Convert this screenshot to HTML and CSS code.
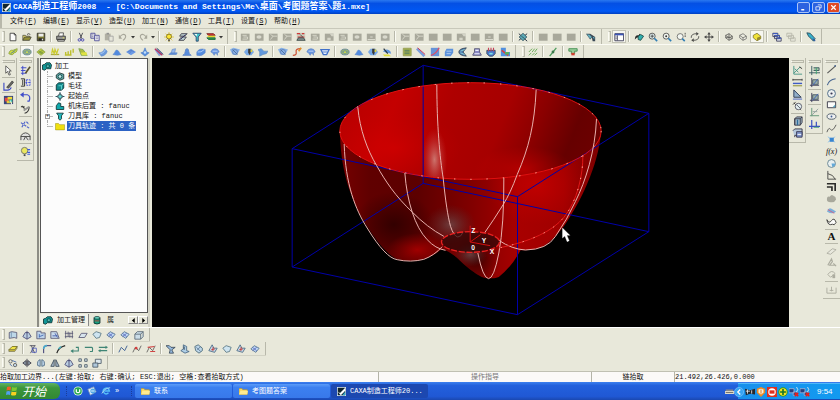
FILE: index.html
```html
<!DOCTYPE html>
<html lang="zh-CN">
<head>
<meta charset="utf-8">
<title>CAXA制造工程师2008</title>
<link rel="stylesheet" href="styles.css">
</head>
<body>
<svg class="defs" aria-hidden="true">
  <symbol id="new" viewBox="0 0 12 12"><path d="M2.500 1.500h5l2 2v7h-7z" fill="#fff" stroke="#222"/><path d="M7.500 1.500v2h2" fill="none" stroke="#222"/></symbol>
  <symbol id="open" viewBox="0 0 12 12"><path d="M1 10V4h3l1 1h4v2" fill="#e8d860" stroke="#443"/><path d="M1 10l2-4h8l-2 4z" fill="#8a8420" stroke="#332"/><path d="M6 3q2-2 4 0" fill="none" stroke="#222"/></symbol>
  <symbol id="save" viewBox="0 0 12 12"><path d="M1.500 1.500h9v9h-9z" fill="#6d6a1a" stroke="#111"/><path d="M3 2h6v3.500H3z" fill="#eee"/><path d="M3 7.500h6v3H3z" fill="#111"/><path d="M7 8h1.500v2H7z" fill="#ddd"/></symbol>
  <symbol id="print" viewBox="0 0 12 12"><path d="M3 5l1-4h5L8.500 5" fill="#fff" stroke="#333"/><path d="M.8 5h10.400v4H.8z" fill="#888" stroke="#222"/><path d="M2 9h8v2H2z" fill="#ccc" stroke="#222"/><path d="M8 7h2" stroke="#ee4"/></symbol>
  <symbol id="cut" viewBox="0 0 12 12"><path d="M4 1l3 7M8 1L5 8" stroke="#223" fill="none"/><circle cx="4" cy="9.500" r="1.500" fill="none" stroke="#22a"/><circle cx="8" cy="9.500" r="1.500" fill="none" stroke="#22a"/></symbol>
  <symbol id="copy" viewBox="0 0 12 12"><path d="M1 1.500h5v6H1z" fill="#dde" stroke="#338"/><path d="M5.500 4h5.500v6.500H5.500z" fill="#eef" stroke="#338"/><path d="M2 3.500h2M2 5.500h2M6.800 6h3M6.800 8h3" stroke="#557" stroke-width=".7"/></symbol>
  <symbol id="paste" viewBox="0 0 12 12"><path d="M1 2h7v8H1z" fill="#aaa99c"/><path d="M3 1h3v2H3z" fill="#888"/><path d="M6 5h5v6H6z" fill="#e5e5da" stroke="#999"/></symbol>
  <symbol id="undo" viewBox="0 0 12 12"><path d="M2 6q4-5 7-2 1 3-3 6" fill="none" stroke="#a09f92" stroke-width="1.300"/><path d="M1 3v5h4z" fill="#a09f92"/></symbol>
  <symbol id="redo" viewBox="0 0 12 12"><path d="M10 6q-4-5-7-2-1 3 3 6" fill="none" stroke="#a09f92" stroke-width="1.300"/><path d="M11 3v5H7z" fill="#a09f92"/></symbol>
  <symbol id="bulb" viewBox="0 0 12 12"><path d="M6 0v12M0 6h12M2 2l8 8M10 2l-8 8" stroke="#d8b800" stroke-width=".8"/><circle cx="6" cy="5.500" r="3" fill="#ffe620" stroke="#665500"/><path d="M5 9h2v2H5z" fill="#333"/></symbol>
  <symbol id="layers" viewBox="0 0 12 12"><path d="M4 2h7L8 5H2zM4 6h6L7 10H1z" fill="#b8ccd0" stroke="#223"/><path d="M9 3L3 9" stroke="#115"/></symbol>
  <symbol id="funnel" viewBox="0 0 12 12"><path d="M1 1.500h10L7.500 6v5H5V6z" fill="#28c0c8" stroke="#125"/><path d="M3 2.500h3L5.500 5z" fill="#fff"/></symbol>
  <symbol id="stack" viewBox="0 0 12 12"><path d="M1 2h8l2 2H3z" fill="#e02020" stroke="#600"/><path d="M1 4.500l2 2h8v-2H3z" fill="#e8d818"/><path d="M1 7l2 2h8V7H3z" fill="#129040" stroke="#052"/></symbol>
  <symbol id="gp" viewBox="0 0 12 12"><path d="M1 2h10.500v8.500H1z" fill="#a0a093"/></symbol>
  <symbol id="ga" viewBox="0 0 12 12"><path d="M1 2h10.500v8.500H1z" fill="#a0a093"/><path d="M3 4h5M3 8.500h6V6H4" fill="none" stroke="#dcdccf"/></symbol>
  <symbol id="gb" viewBox="0 0 12 12"><path d="M1 2h10.500v8.500H1z" fill="#a0a093"/><ellipse cx="6" cy="6" rx="3" ry="2" fill="#d8d8cc"/></symbol>
  <symbol id="gc" viewBox="0 0 12 12"><path d="M1 2h10.500v8.500H1z" fill="#a0a093"/><path d="M3 9l3-4h5M6 5L3 3" fill="none" stroke="#dcdccf"/></symbol>
  <symbol id="gd" viewBox="0 0 12 12"><path d="M1 2h10.500v8.500H1z" fill="#a0a093"/><path d="M2 9h9M5 6h3" stroke="#e4e4d8"/></symbol>
  <symbol id="ge" viewBox="0 0 12 12"><path d="M1 2h10.500v8.500H1z" fill="#a0a093"/><path d="M7 2h5v3H9zM4 10V7h4v3" fill="#d2d2c5"/></symbol>
  <symbol id="mach" viewBox="0 0 12 12"><path d="M1 1h10v9H1z" fill="#c9cdbb"/><path d="M1 2h4M7 2h3M2 6h8" stroke="#c22" stroke-width="1.500"/><path d="M1 10l2-3h6l2 3zM5 3l3 3" fill="#788" stroke="#233"/></symbol>
  <symbol id="wand" viewBox="0 0 12 12"><path d="M1 2l10 9M1 10l10-8" stroke="#123" stroke-width="1.200"/><path d="M6 1.500L10.500 6 6 10.500 1.500 6z" fill="#4aa4b4" stroke="#134"/><path d="M4 5l4 3" stroke="#134"/></symbol>
  <symbol id="bino" viewBox="0 0 12 12"><path d="M0 2h5l6 4v5H8L7 7 5 9z" fill="#234" /><path d="M1 3h3l3 3-2 2zM8 6h2v3" fill="#55a8bb"/></symbol>
  <symbol id="win" viewBox="0 0 12 12"><path d="M1 2h10.500v8.500H1z" fill="#fff" stroke="#113"/><path d="M1 2h10.500v2H1z" fill="#2440b0"/><path d="M4 4v6M2 6h1M2 8h1" stroke="#113"/></symbol>
  <symbol id="cubes" viewBox="0 0 12 12"><path d="M1 9q0-6 5-5V2l4 3-4 3V6Q3 6 1 9z" fill="#111"/><path d="M5 5l3-2 3.500 2-3.500 5-3-1z" fill="#18a8a8" stroke="#033"/></symbol>
  <symbol id="zin" viewBox="0 0 12 12"><circle cx="5" cy="5" r="3.600" fill="#ddeef2" stroke="#333"/><path d="M3 5h4M5 3v4" stroke="#222"/><path d="M7.500 7.500l3.500 3.500" stroke="#1870b0" stroke-width="2"/></symbol>
  <symbol id="zdot" viewBox="0 0 12 12"><circle cx="5" cy="5" r="3.600" fill="#f4f8f4" stroke="#333"/><circle cx="5" cy="5" r="1.200" fill="#222"/><path d="M7.500 7.500l3.500 3.500" stroke="#1870b0" stroke-width="2"/></symbol>
  <symbol id="zsel" viewBox="0 0 12 12"><circle cx="5" cy="5.500" r="3.600" fill="#f4f8f4" stroke="#555"/><path d="M7.500 8l3 3" stroke="#1870b0" stroke-width="2"/><path d="M11 1v6" stroke="#222" stroke-dasharray="2 1"/></symbol>
  <symbol id="rot" viewBox="0 0 12 12"><path d="M1.500 7Q1 2 8 2M10.500 5Q11 10 4 10" fill="none" stroke="#333"/><path d="M7.500 0l3 2-3 2.500zM4.500 7.500l-3 2.500 3 2z" fill="#333"/></symbol>
  <symbol id="pan" viewBox="0 0 12 12"><path d="M6 2v8M2 6h8" stroke="#333" stroke-width="1.200"/><path d="M6 0l2 3H4zM6 12l2-3H4zM0 6l3-2v4zM12 6L9 4v4z" fill="#333"/></symbol>
  <symbol id="wire" viewBox="0 0 12 12"><path d="M2 4l4-2 4 3v3l-4 2-4-3z M2 4l4 3 4-2M6 7v3M6 2v4L2 7M6 6l4 2" fill="#ddddd0" stroke="#333" stroke-width=".8"/></symbol>
  <symbol id="hide" viewBox="0 0 12 12"><path d="M2 4l4-2 4 3v3l-4 2-4-3z M2 4l4 3 4-2M6 7v3" fill="#eeeee4" stroke="#444" stroke-width=".8"/></symbol>
  <symbol id="solid" viewBox="0 0 12 12"><path d="M1.500 4L6 1.500 10.500 5v3L6 10.500 1.500 7z" fill="#f0e020" stroke="#554a00" stroke-width=".8"/><path d="M6 7l4.500-2v3L6 10.500z" fill="#8a7d10"/></symbol>
  <symbol id="casc" viewBox="0 0 12 12"><path d="M1 1.500h6v4H1zM3 4h6v4H3zM5.500 7H11v4H5.500z" fill="#dde4f4" stroke="#224"/><path d="M1 1.800h6M3 4.300h6M5.500 7.300H11" stroke="#2848b8" stroke-width="1.300"/></symbol>
  <symbol id="cascg" viewBox="0 0 12 12"><path d="M1 1.500h6v4H1zM3 4h6v4H3zM5.500 7H11v4H5.500z" fill="#e8e8dc" stroke="#b0b0a2"/></symbol>
  <symbol id="pen" viewBox="0 0 12 12"><path d="M1 1l4 .5L11 8l-2 3-6-6z" fill="#20a8c8" stroke="#134"/><path d="M8 8l3 3" stroke="#1848a0" stroke-width="1.500"/></symbol>
  <symbol id="y1" viewBox="0 0 12 12"><path d="M1 8q1-5 5-4l5-2q0 5-4 5-1 4-6 1z" fill="#d4dc28" stroke="#7a9828"/><path d="M3 8l6-4" stroke="#2868a0"/></symbol>
  <symbol id="y2" viewBox="0 0 12 12"><ellipse cx="6" cy="6" rx="5" ry="3.500" fill="#8aa868" stroke="#547898"/><path d="M3 6l3-1.500L9 6 6 8z" fill="#d8e030" stroke="#589"/></symbol>
  <symbol id="y3" viewBox="0 0 12 12"><path d="M1 6l5-4 5 4-5 4z" fill="#c0cc28" stroke="#88a03c"/><path d="M3 7l5-3M5 8.500l4-3M3 5l5 3" stroke="#487830" stroke-width=".8"/></symbol>
  <symbol id="y4" viewBox="0 0 12 12"><path d="M1 9h10" stroke="#a5a52c" stroke-width="1.500"/><path d="M2 8l1-5 2 5 1-5 2 5 2-6" fill="none" stroke="#c8c818" stroke-width="1.500"/></symbol>
  <symbol id="y5" viewBox="0 0 12 12"><path d="M2 9V6M5 9V5M8 9V4M11 7V2M1 9.500h8" stroke="#b8ba18" stroke-width="1.700"/></symbol>
  <symbol id="y6" viewBox="0 0 12 12"><path d="M1 2l5 1 5 7H4z" fill="#a8b82c" stroke="#68983c"/><path d="M3 7l7-1 1 4H5z" fill="#dfe22c"/></symbol>
  <symbol id="b1" viewBox="0 0 12 12"><path d="M1 7q5 0 7-5l3 3q-1 5-7 6z" fill="#5a90dc" stroke="#4c7cc8" stroke-width=".7"/><path d="M3 8q4 0 6-5" fill="none" stroke="#a8ccff"/></symbol>
  <symbol id="b2" viewBox="0 0 12 12"><path d="M1 9q2-1 3-4t4 0q1 3 3 4-4 2-10 0z" fill="#3d7ee0" stroke="#4c7cc8" stroke-width=".7"/></symbol>
  <symbol id="b3" viewBox="0 0 12 12"><path d="M0 6l6-4 6 4-6 4z" fill="#5a90e8"/><path d="M2 6l4-2 4 2M4 8l3-4" stroke="#3d68c0" fill="none" stroke-width=".8"/></symbol>
  <symbol id="b4" viewBox="0 0 12 12"><path d="M1 7l3-1 2-5 2 5 3 1-5 4z" fill="#4080dd" stroke="#4070c0" stroke-width=".7"/><circle cx="6" cy="6.500" r="1.500" fill="#bcdcff"/></symbol>
  <symbol id="b5" viewBox="0 0 12 12"><path d="M1 4l4-2 6 6-5 3z" fill="#789bd8"/><path d="M1 2l9 8" stroke="#b01850" stroke-width="1.700"/><path d="M3 1l8 8" stroke="#234"/></symbol>
  <symbol id="b6" viewBox="0 0 12 12"><path d="M1 9h9l1-2H3z" fill="#4c85dd" stroke="#4070c0" stroke-width=".7"/><path d="M4 7l1-4 4-1-1 5z" fill="#8fb5f0" stroke="#4070c0" stroke-width=".7"/></symbol>
  <symbol id="b7" viewBox="0 0 12 12"><path d="M1 10q3-2 3-5t2-3 2 3 3 5z" fill="#4580dd" stroke="#4674c4"/></symbol>
  <symbol id="b8" viewBox="0 0 12 12"><path d="M1 6q3-5 10-3v4q-4 5-10 3z" fill="#4080e0" stroke="#4674c4" stroke-width=".7"/><path d="M2 6q4 1 8-3" fill="none" stroke="#b5d4ff"/></symbol>
  <symbol id="b9" viewBox="0 0 12 12"><path d="M1 6q1-4 5-4t5 4l-2 1v3L7 7 5 10 3 7z" fill="#5288e0" stroke="#4674c4" stroke-width=".7"/><path d="M3 5h6" stroke="#cce0ff"/></symbol>
  <symbol id="c1" viewBox="0 0 12 12"><path d="M0 3l4-2 8 2-4 7-5-1z" fill="#78a8e8"/><circle cx="6" cy="6" r="3" fill="none" stroke="#4a70b0"/><path d="M3 3l6 6" stroke="#358"/></symbol>
  <symbol id="c2" viewBox="0 0 12 12"><path d="M0 6l3-4h6l3 4-3 4H3z" fill="#68a0e8"/><path d="M5 2h3v5l-1 3-2-3z" fill="#222"/><path d="M8 3h2v3H8z" fill="#e4d020"/></symbol>
  <symbol id="c3" viewBox="0 0 12 12"><path d="M0 3l4-1 3 3h5l-2 3-4 1-4 2V6z" fill="#4f8edf" stroke="#4a78b0" stroke-width=".7"/></symbol>
  <symbol id="c4" viewBox="0 0 12 12"><path d="M1 10q5 0 4-4t5-4" fill="none" stroke="#c84020" stroke-width="1.500"/><path d="M8 5l3-4" stroke="#e08010" stroke-width="2"/></symbol>
  <symbol id="c5" viewBox="0 0 12 12"><path d="M1 3h10L8 9H4z" fill="#e6efff" stroke="#2860c8" stroke-width="1.500"/><path d="M3 6h6" stroke="#2860c8"/></symbol>
  <symbol id="c6" viewBox="0 0 12 12"><path d="M1 5q5-4 9 0l1 3-4-1H5z" fill="#4a88e0"/><path d="M1 9h7l3 2H3z" fill="#e0dd20"/><path d="M2 2l5 6" stroke="#123" stroke-width="1.500"/></symbol>
  <symbol id="d1" viewBox="0 0 12 12"><path d="M1.500 1.500h9.500v9H1.500z" fill="#9aa838" stroke="#8a9440"/><path d="M3 4h6M3 6h6M3 8h6" stroke="#3a6a58"/></symbol>
  <symbol id="d2" viewBox="0 0 12 12"><path d="M1 2l9 9" stroke="#6c94dc" stroke-width="3"/><path d="M2 1l9 8" stroke="#cc2048" stroke-width="1.200"/></symbol>
  <symbol id="d3" viewBox="0 0 12 12"><path d="M1 1h10v10H1z" fill="#5588d8"/><path d="M1 10Q7 9 11 1" stroke="#d83858" fill="none" stroke-width="1.500"/></symbol>
  <symbol id="d4" viewBox="0 0 12 12"><path d="M3 2h8v5l-3 4H1V6z" fill="#4886dd"/><path d="M3 5h6M3 8h5" stroke="#bcd5f8"/></symbol>
  <symbol id="d5" viewBox="0 0 12 12"><path d="M10 1Q1 2 1 6t9 5L6 6z" fill="#3569a8" stroke="#234"/><path d="M3 5l5-2M3 7l5 2" stroke="#8fe0e0"/></symbol>
  <symbol id="d6" viewBox="0 0 12 12"><path d="M3 2h6v4l2 3v1H1V9l2-3z" fill="#7c7cc0" stroke="#446"/><path d="M4 4h4M3 8h6" stroke="#eef0ff" stroke-width="1.300"/></symbol>
  <symbol id="d7" viewBox="0 0 12 12"><path d="M1 4h10v4l-3 3H4L1 8z" fill="#3568c8" stroke="#234"/><path d="M3 1v4M6 1v4M9 1v4" stroke="#c02848" stroke-width="1.300"/><path d="M4 8h4" stroke="#70e0e8" stroke-width="2"/></symbol>
  <symbol id="d8" viewBox="0 0 12 12"><path d="M1 1h6v5h5v5H1z" fill="#3c84e0"/><path d="M2 4l8 6" stroke="#d82828" stroke-width="2"/><path d="M6 6h5v3H6z" fill="#40a850"/></symbol>
  <symbol id="hat" viewBox="0 0 12 12"><path d="M1 6l4-4M5 6l3-4M8 6l3-4M1 10l3-3M5 10l3-3M8 10l3-3" stroke="#62a850" stroke-width="1.200"/></symbol>
  <symbol id="gline" viewBox="0 0 12 12"><path d="M2 11l8-10" stroke="#349048" stroke-width="1.500"/><circle cx="6" cy="6" r="1.700" fill="#246838"/></symbol>
  <symbol id="tee" viewBox="0 0 12 12"><path d="M1 2h10v3H8v3H4V5H1z" fill="#8cc890" stroke="#248038"/><path d="M4 7h4v3H4z" fill="#d02818"/></symbol>
  <symbol id="arrow" viewBox="0 0 12 12"><path d="M3 1v8l2-2 1.500 4 1.500-.5L6.500 6.500H9z" fill="#fff" stroke="#222" stroke-width=".8"/></symbol>
  <symbol id="sketch" viewBox="0 0 12 12"><path d="M1 3v8h4q3 0 4-3" fill="none" stroke="#2030c0" stroke-width="1.200"/><path d="M4 8l6-7 1.500 1.500L6 9z" fill="#555" stroke="#111" stroke-width=".7"/></symbol>
  <symbol id="pal" viewBox="0 0 12 12"><path d="M1 1h10v9H1z" fill="#203070"/><path d="M2 3h4v4H2z" fill="#e03030"/><path d="M5 2h5v3H5z" fill="#f0d820"/><path d="M4 6h6v3H4z" fill="#e8c828"/><path d="M7 5h3v3H7z" fill="#28b8a0"/><path d="M8 6l2 5" stroke="#fff"/></symbol>
  <symbol id="e1" viewBox="0 0 12 12"><path d="M1 3h6M1 6h5M1 9h6M3 1v10" stroke="#2330c8"/><path d="M6 9l5-7" stroke="#443c18" stroke-width="1.800"/></symbol>
  <symbol id="e2" viewBox="0 0 12 12"><path d="M1 2h4v8H1M3 3v6" fill="none" stroke="#111"/><path d="M7 3h4v6H7zM6 6h5" fill="none" stroke="#2838e0" stroke-dasharray="2 1"/></symbol>
  <symbol id="e3" viewBox="0 0 12 12"><path d="M2 3h6q4 1 2 7H8" fill="none" stroke="#2838c8" stroke-width="1.300"/><path d="M4 0v6L0 3z" fill="#2838c8"/></symbol>
  <symbol id="e4" viewBox="0 0 12 12"><path d="M1 3h4M2 2l3 3M10 3q0 6-5 7" fill="none" stroke="#222" stroke-width="1.200"/><path d="M4 7l6-4" stroke="#888" stroke-width="2"/></symbol>
  <symbol id="e5" viewBox="0 0 12 12"><path d="M1 4l9 6M2 9l4-7M7 3l3 3" stroke="#3850c8" stroke-width="1.200" stroke-dasharray="3 1"/></symbol>
  <symbol id="e6" viewBox="0 0 12 12"><path d="M1 10V5q5-6 10 0v5M1 6h10M4 10l2-4 3 4" fill="#ddd" stroke="#333"/></symbol>
  <symbol id="e7" viewBox="0 0 12 12"><circle cx="5" cy="5" r="3.500" fill="#ece850" stroke="#665"/><path d="M4 9h2v2H4z" fill="#333"/><path d="M8 4h3M8 7h3M8 9h3" stroke="#2848d8" stroke-width="1.300"/></symbol>
  <symbol id="f1" viewBox="0 0 12 12"><path d="M2 1v9h9M2 9l7-7M3 4l4 4" fill="none" stroke="#2e8878"/><path d="M8 2l3 2" stroke="#222"/></symbol>
  <symbol id="f2" viewBox="0 0 12 12"><path d="M1 2v2M11 2v2M1 3h10" stroke="#222"/><path d="M1 7h10" stroke="#2848c0" stroke-width="1.500"/><path d="M1 9.500h10" stroke="#a0a050" stroke-width="1.500"/></symbol>
  <symbol id="f3" viewBox="0 0 12 12"><path d="M2 1v8h8z" fill="#86a8c8" stroke="#124"/><path d="M1 11h10" stroke="#2848c0"/></symbol>
  <symbol id="f4" viewBox="0 0 12 12"><path d="M2 2l8 8M4 1l-3 3" stroke="#222"/><circle cx="7" cy="6" r="3.500" fill="#e4f2f6" stroke="#445"/><path d="M5 4l4 4" stroke="#445"/></symbol>
  <symbol id="f5" viewBox="0 0 12 12"><path d="M3 10V3l2-2h6M3 3h6v7H3zM9 3l2-2v6L9 10" fill="#9cb8cc" stroke="#223"/><path d="M6 4v6" stroke="#125a90" stroke-width="1.500"/></symbol>
  <symbol id="f6" viewBox="0 0 12 12"><path d="M1 3l2-2h8v7H3v2" fill="#b0c4dc" stroke="#223"/><path d="M5 4h6v6H5z" fill="#7088c8" stroke="#224"/><path d="M6 7h4" stroke="#fff"/></symbol>
  <symbol id="h1" viewBox="0 0 12 12"><path d="M3 1v10M0 8.500h12M5 3h6v3H5" stroke="#224850" fill="#a8bfa8"/><path d="M8 3v7" stroke="#26a060"/></symbol>
  <symbol id="h2" viewBox="0 0 12 12"><path d="M3 1v10M1 9h10" stroke="#224"/><path d="M4 3h6v5H4z" fill="#90a8a0" stroke="#345"/><path d="M4 9l6-7" stroke="#2850b8"/></symbol>
  <symbol id="h3" viewBox="0 0 12 12"><path d="M3 1v9M1 9.500h10" stroke="#4e8a68"/><path d="M3 9l7-7M4 5h5" stroke="#8a9a98" /></symbol>
  <symbol id="h4" viewBox="0 0 12 12"><path d="M3 1v10M0 8h12M8 3v5" stroke="#203ac0" stroke-width="1.300"/><path d="M5 9h6" stroke="#289060"/></symbol>
  <symbol id="line" viewBox="0 0 12 12"><path d="M1.500 10l9-8" stroke="#444" stroke-width="1.200"/><circle cx="10" cy="2" r="1" fill="#358"/></symbol>
  <symbol id="arc" viewBox="0 0 12 12"><path d="M1.500 10Q3 4 10.500 3" fill="none" stroke="#358" stroke-width="1.200"/></symbol>
  <symbol id="circ" viewBox="0 0 12 12"><circle cx="6" cy="6" r="4.300" fill="#eef2f4" stroke="#357"/><circle cx="6" cy="6" r="1.200" fill="#224"/></symbol>
  <symbol id="rect" viewBox="0 0 12 12"><path d="M1.500 3h9v6.500h-9z" fill="#fff" stroke="#223"/><path d="M7 9l3-3v3z" fill="#48a0c0"/></symbol>
  <symbol id="ell" viewBox="0 0 12 12"><ellipse cx="6" cy="6" rx="4.800" ry="3" fill="#f0f2f4" stroke="#345"/><circle cx="6" cy="6" r="1" fill="#248"/></symbol>
  <symbol id="spl" viewBox="0 0 12 12"><path d="M1 10q2-6 4-3t6-5" fill="none" stroke="#444"/></symbol>
  <symbol id="pt" viewBox="0 0 12 12"><path d="M2 3l8 6M10 3L2 9" stroke="#88c0ec"/><path d="M4 4h4.500v4.500H4z" fill="#2078d0"/></symbol>
  <symbol id="disc" viewBox="0 0 12 12"><circle cx="6" cy="6" r="4.300" fill="#e8f0f4" stroke="#578"/><path d="M6 6h4v2l-3 2z" fill="#50a0d8"/></symbol>
  <symbol id="ang" viewBox="0 0 12 12"><path d="M2 1v9h9M2 4l5 2 3 4" fill="none" stroke="#333"/></symbol>
  <symbol id="off" viewBox="0 0 12 12"><path d="M1 3h9v8M1 6.500h5.500V11" fill="none" stroke="#111" stroke-width="1.800"/></symbol>
  <symbol id="blob" viewBox="0 0 12 12"><path d="M1 7q0-4 3-3 2-3 4-1 3 1 3 4-2 4-6 3-4 0-4-3z" fill="#a0a094"/></symbol>
  <symbol id="surf" viewBox="0 0 12 12"><path d="M1 7q2-5 5-3t5 3q-4 4-10 0z" fill="#6ca8dc"/><path d="M2 5l7 4" stroke="#d05078"/></symbol>
  <symbol id="clip" viewBox="0 0 12 12"><path d="M1 4q2 5 5 1t5 2q-2 4-4 2-5 2-6-5z" fill="#fff" stroke="#222"/></symbol>
  <symbol id="er1" viewBox="0 0 12 12"><path d="M1 8l6-5 4 1-6 5z" fill="#e8e8de" stroke="#a8a89c"/></symbol>
  <symbol id="er2" viewBox="0 0 12 12"><path d="M2 9l4-7 1 3-3 4h7M8 7l3 3" fill="none" stroke="#a4a498" stroke-width="1.300"/></symbol>
  <symbol id="er3" viewBox="0 0 12 12"><path d="M2 6q4-6 8-1L5 9z" fill="none" stroke="#a4a498"/><path d="M7 6h3v4H7z" fill="#a4a498"/></symbol>
  <symbol id="er4" viewBox="0 0 12 12"><path d="M1 4v6h10V4M4 7h4M6 3v5" fill="none" stroke="#a4a498"/></symbol>
  <symbol id="s1" viewBox="0 0 12 12"><path d="M1.500 3l3-1 6 1v7l-3-1-6 1z" fill="#b8d6ea" stroke="#446"/><path d="M4 2v7" stroke="#68a"/></symbol>
  <symbol id="s2" viewBox="0 0 12 12"><path d="M6 1v3M4 3h4l3 5-5 3-5-3z" fill="#b4cce4" stroke="#336"/><path d="M6 3v8" stroke="#336"/></symbol>
  <symbol id="s3" viewBox="0 0 12 12"><path d="M1 1.500h5v2h5v7H1z" fill="#b8d0ec" stroke="#446"/><path d="M4 8l5-2M4 5v4" stroke="#2450a8"/></symbol>
  <symbol id="s4" viewBox="0 0 12 12"><path d="M1 2h7l3 8H1z" fill="#c4d8ee" stroke="#446"/><path d="M3 7h6M6 4l3 5" stroke="#2440a0"/></symbol>
  <symbol id="s5" viewBox="0 0 12 12"><path d="M2 1v9M5 2v6M10 1v9M7 3v6M1 4h10M1 8h10" stroke="#446" fill="none"/></symbol>
  <symbol id="s6" viewBox="0 0 12 12"><path d="M1 9l3-5h7L8 9z" fill="#d5e4f0" stroke="#446"/></symbol>
  <symbol id="s7" viewBox="0 0 12 12"><path d="M1 5l4-3 6 2-2 5-4 1z" fill="#cbe4f4" stroke="#467"/></symbol>
  <symbol id="s8" viewBox="0 0 12 12"><path d="M1 6l4-4 6 3-4 5z" fill="#b8d4f8" stroke="#468"/><path d="M3 4l5 4M3 8l5-4" stroke="#2838a8" stroke-width=".8"/></symbol>
  <symbol id="s9" viewBox="0 0 12 12"><path d="M1 5h7v6H1zM1 5l3-3h7L8 5M11 2v6l-3 3" fill="#c8dcea" stroke="#456"/></symbol>
  <symbol id="erase" viewBox="0 0 12 12"><path d="M1 7l4-4h6L8 7z" fill="#f0e430" stroke="#665c00"/><path d="M1 7h7l3-4v2L8 9H1z" fill="#d0bc20" stroke="#554" stroke-width=".7"/></symbol>
  <symbol id="t1" viewBox="0 0 12 12"><path d="M2 2h7M4 2l4 9M8 2L3 11" stroke="#334" fill="none"/><path d="M5 5h5v5H5z" fill="none" stroke="#3848b8"/></symbol>
  <symbol id="t2" viewBox="0 0 12 12"><path d="M2 11V5q0-3 4-3h5" fill="none" stroke="#226" stroke-width="1.200"/><path d="M2 6q0-4 4-4" stroke="#38a0c8" fill="none" stroke-width="2"/></symbol>
  <symbol id="t3" viewBox="0 0 12 12"><path d="M1 11Q3 4 11 2" fill="none" stroke="#111" stroke-width="1.500"/><path d="M3 6l3-3" stroke="#38a8b8" stroke-width="2"/></symbol>
  <symbol id="t4" viewBox="0 0 12 12"><path d="M1 8.500h9V4H7" fill="none" stroke="#287868" stroke-width="1.300"/><path d="M4 6v5L1 8.500z" fill="#287868"/></symbol>
  <symbol id="t5" viewBox="0 0 12 12"><path d="M1 4h8q2 0 1 5H7" fill="none" stroke="#287868" stroke-width="1.300"/></symbol>
  <symbol id="t6" viewBox="0 0 12 12"><path d="M1 4h9M2 8h9" fill="none" stroke="#287868" stroke-width="1.500"/><path d="M9 2l3 2-3 2zM3 6v4L0 8z" fill="#287868"/></symbol>
  <symbol id="u1" viewBox="0 0 12 12"><path d="M1 10l3-6 4 4 3-6" fill="none" stroke="#335890" stroke-width="1.200"/></symbol>
  <symbol id="u2" viewBox="0 0 12 12"><path d="M1 10l3-6 4 4 3-6" fill="none" stroke="#444"/><circle cx="5" cy="5" r="1.600" fill="#d02828"/></symbol>
  <symbol id="u3" viewBox="0 0 12 12"><path d="M1 10l3-6 4 4 3-6" fill="none" stroke="#444"/><path d="M2 4l8-1M5 9h6" stroke="#d03030" stroke-width="1.400"/></symbol>
  <symbol id="v1" viewBox="0 0 12 12"><path d="M0 2h4l2 2h5L7 7l2 4H4l1-4z" fill="#8ab4e0" stroke="#234"/></symbol>
  <symbol id="v2" viewBox="0 0 12 12"><path d="M1 8l3-2V1l4 2v5l3 1-5 2z" fill="#a8cce8" stroke="#357"/><path d="M5 3v4" stroke="#123"/></symbol>
  <symbol id="v3" viewBox="0 0 12 12"><path d="M1 3l4-2 5 4v3l-4 3-4-3z" fill="#b8d4ec" stroke="#356"/><path d="M3 4l5 5M4 7l4-4" stroke="#468"/></symbol>
  <symbol id="v4" viewBox="0 0 12 12"><path d="M1 8l4-7 2 4h4l-3 5z" fill="#c0d8ec" stroke="#357"/><path d="M4 7l4-1M6 4v4" stroke="#c02828" stroke-width="1.300"/></symbol>
  <symbol id="w1" viewBox="0 0 12 12"><circle cx="3" cy="4" r="2" fill="none" stroke="#444"/><circle cx="8.500" cy="8.500" r="2" fill="#bcd4ec" stroke="#444"/><path d="M5 3l5 2M2 7l3 3" stroke="#2450a0"/></symbol>
  <symbol id="w2" viewBox="0 0 12 12"><path d="M6 1v10M1 6l4-3v6zM11 6L7 3v6z" fill="#8898a8" stroke="#223"/></symbol>
  <symbol id="w3" viewBox="0 0 12 12"><path d="M5 2Q1 3 2 9l3 1zM7 2q4 1 3 7l-3 1z" fill="#b8d0e8" stroke="#357"/></symbol>
  <symbol id="w4" viewBox="0 0 12 12"><path d="M5 2v8H1zM7 2v8h4z" fill="#a0b4c8" stroke="#234"/></symbol>
  <symbol id="w5" viewBox="0 0 12 12"><path d="M1 1h3v3H1zM8 1h3v3H8zM1 8h3v3H1zM8 8h3v3H8z" fill="#d8e4ea" stroke="#345"/></symbol>
  <symbol id="w6" viewBox="0 0 12 12"><path d="M4 1.500h7v5H4z" fill="#dce8f0" stroke="#345"/><path d="M1 6h6v5H1z" fill="#a8c4dc" stroke="#345"/></symbol>
  <symbol id="gear" viewBox="0 0 12 12"><path d="M0 4l3-1 2-2h5l2 3-1 5H5l-2 2-3-1z" fill="#139898" stroke="#022"/><path d="M5 4h4v3H5z" fill="#70e0d8" stroke="#033"/></symbol>
  <symbol id="model" viewBox="0 0 12 12"><path d="M1 4l4-3 6 2v6l-5 2-5-3z" fill="#60a8a8" stroke="#122"/><circle cx="6" cy="6" r="2.500" fill="#c4ecec" stroke="#033"/></symbol>
  <symbol id="blank" viewBox="0 0 12 12"><path d="M1 4l3-3h7v7l-3 3H1z" fill="#12898c" stroke="#022"/><path d="M4 5h4v5M8 5l3-3" stroke="#78e4e0" fill="none"/></symbol>
  <symbol id="start" viewBox="0 0 12 12"><path d="M6 0v12M0 6h12" stroke="#134"/><path d="M6 2l4 4-4 4-4-4z" fill="#68a0a0" stroke="#023"/><circle cx="6" cy="6" r="1.500" fill="#58e4e0"/></symbol>
  <symbol id="mc" viewBox="0 0 12 12"><path d="M1 10V5l3-4 3 1v4h4v4z" fill="#10a8ac" stroke="#022"/></symbol>
  <symbol id="tool" viewBox="0 0 12 12"><path d="M1.500 1.500h9L8 5v4l-2 2-2-2V5z" fill="#24b8bc" stroke="#022"/></symbol>
  <symbol id="fold" viewBox="0 0 12 12"><path d="M0 10.500V2h4l1.500 1.500H12v7z" fill="#f0e010" stroke="#8c8400" stroke-width=".6"/></symbol>
  <symbol id="db" viewBox="0 0 12 12"><path d="M2 2.500v7q4 2.500 8 0v-7" fill="#18a080" stroke="#022"/><ellipse cx="6" cy="2.500" rx="4" ry="1.700" fill="#70e4d0" stroke="#022"/><path d="M3 6.500h6" stroke="#d22"/></symbol>
  <symbol id="app" viewBox="0 0 12 12"><path d="M0 0h12v12H0z" fill="#dcecf4"/><path d="M1 1h10v10H1z" fill="#10242c"/><path d="M1 6l3 2 7-7v4L5 11z" fill="#fff"/><path d="M7 11l4-5v5z" fill="#30a8c8"/></symbol>
  <symbol id="dir" viewBox="0 0 12 12"><path d="M0 10V2h4l1 1.500h6V10z" fill="#f8d860" stroke="#b89020" stroke-width=".7"/><path d="M0 10l2-5h10l-1 5z" fill="#ffeb90"/></symbol>
  <symbol id="flag" viewBox="0 0 12 12"><path d="M1 2q2-1 4 0L4.500 5.500q-2-1-4 0z" fill="#f06028"/><path d="M6 2q3 1 5 0l-.5 3.500q-3 1-5 0z" fill="#80c830"/><path d="M.5 6.500q2-1 4 0L4 10q-2-1-4 0z" fill="#50a0f0"/><path d="M5.500 6.500q3 1 5 0L10 10q-3 1-5 0z" fill="#f8d020"/></symbol>
  <symbol id="q1" viewBox="0 0 12 12"><circle cx="6" cy="6" r="5.500" fill="#e8f8e8"/><circle cx="6" cy="6" r="4.500" fill="#28a850"/><path d="M4 4v3q2 2 4 0V4" fill="none" stroke="#fff" stroke-width="1.500"/></symbol>
  <symbol id="q2" viewBox="0 0 12 12"><path d="M1 4l7-3 3 6-7 4z" fill="#e8f0fa" stroke="#7090b8"/><circle cx="7" cy="6" r="3" fill="#50a8e8"/><path d="M5 6h4" stroke="#fff"/></symbol>
  <symbol id="q3" viewBox="0 0 12 12"><path d="M9 8q-3 3-5.500 0T5 3t5 3H4" fill="none" stroke="#58c0f8" stroke-width="1.700"/><path d="M1 9Q4 3 11 2" fill="none" stroke="#bde"/></symbol>
  <symbol id="kb" viewBox="0 0 12 12"><path d="M1 4h10v2H1z" fill="#888"/><path d="M0 6h12v4H0z" fill="#ddd8c8"/><path d="M1 8h10" stroke="#555"/></symbol>
  <symbol id="back" viewBox="0 0 12 12"><circle cx="6" cy="6" r="5.500" fill="#38a4f4" stroke="#9cd4ff" stroke-width=".6"/><path d="M7.500 3l-3 3 3 3" fill="none" stroke="#fff" stroke-width="1.500"/></symbol>
  <symbol id="r1" viewBox="0 0 12 12"><path d="M0 2l6 2 6-2v7l-6-1-5 2z" fill="#25282e"/><path d="M1 5h5M8 4v4M3 3v5" stroke="#eee"/></symbol>
  <symbol id="r2" viewBox="0 0 12 12"><path d="M6 0l5 2v5l-5 5-5-5V2z" fill="#f08820"/><path d="M6 2l3 1v4L6 9 3 7V3z" fill="#f8f0d8"/><path d="M6 3v5" stroke="#d06010"/></symbol>
  <symbol id="r3" viewBox="0 0 12 12"><path d="M0 0h12v12H0z" fill="#e03020"/><circle cx="6" cy="6" r="4.500" fill="#fff"/><path d="M3 4h6v4H3z" fill="#e03020"/></symbol>
  <symbol id="r4" viewBox="0 0 12 12"><circle cx="6" cy="6" r="5.700" fill="#2c9830"/><circle cx="6" cy="6" r="4.500" fill="#f4e020"/><path d="M6 2.500v7M2.500 6h7" stroke="#187828" stroke-width="2"/></symbol>
  <symbol id="r5" viewBox="0 0 12 12"><path d="M0 2h6v5H0zM5 6h5v4H5z" fill="#244080" stroke="#9ab0d8"/><path d="M9 0q3 3 0 6" fill="none" stroke="#e8e8e8"/><path d="M7 7l4 4M11 7l-4 4" stroke="#e02020" stroke-width="2"/></symbol>
  <symbol id="caret" viewBox="0 0 6 12"><path d="M1 5h4L3 7.500z" fill="#222"/></symbol>
</svg>

<header class="title">
  <svg class="app-icon"><use href="#app"/></svg>
  <h1>CAXA<span>制造工程师</span>2008&nbsp; - [C:\Documents and Settings\Me\<span>桌面</span>\<span>考图题答案</span>\<span>题</span>1.mxe]</h1>
  <div class="winbtns">
    <button aria-label="最小化"><svg viewBox="0 0 12 12"><path d="M3 9h4" stroke="#fff" stroke-width="2"/></svg></button>
    <button aria-label="还原"><svg viewBox="0 0 12 12"><path d="M5 2.500h4.500v4H8M2.500 5h5v4.500h-5z" fill="none" stroke="#fff"/></svg></button>
    <button class="close" aria-label="关闭"><svg viewBox="0 0 12 12"><path d="M3 3l6 6M9 3L3 9" stroke="#fff" stroke-width="1.600"/></svg></button>
  </div>
</header>

<nav class="menu">
  <button>文件(<u>F</u>)</button><button>编辑(<u>E</u>)</button><button>显示(<u>V</u>)</button><button>造型(<u>U</u>)</button><button>加工(<u>N</u>)</button><button>通信(<u>D</u>)</button><button>工具(<u>T</u>)</button><button>设置(<u>S</u>)</button><button>帮助(<u>H</u>)</button>
</nav>

<div class="row row-main">
  <div class="bar" data-icons="new open save | print | cut copy paste undo v redo v | bulb layers funnel stack v"></div>
  <div class="bar" data-icons="ga gb gc gc mach ga ge ga gb gd gb | gc gc gp gp ge gp gd gp | wand | gp gp gp | bino"></div>
  <div class="bar" data-icons="*win | cubes zin zdot zsel rot pan | wire hide *solid | casc cascg | pen"></div>
</div>
<div class="row">
  <div class="bar" data-icons="y1 *y2 y3 y4 y5 y6 | b1 b2 b3 b4 b5 b6 b7 b8 b9 | c1 c2 c3 | c1 c4 b9 c5 | y2 b2 c2 c6 | d1 d2 d3 d4 d5 d6 d7 d8"></div>
  <div class="bar" data-icons="hat | gline | tee"></div>
</div>

<main>
  <div class="bar col" data-icons="arrow | sketch | pal"></div>
  <div class="bar col" data-icons="e1 e2 | e3 e4 | e5 e6 | e7"></div>
  <aside class="panel">
    <ul class="tree">
      <li class="root"><svg><use href="#gear"/></svg><span>加工</span></li>
      <li><svg><use href="#model"/></svg><span>模型</span></li>
      <li><svg><use href="#blank"/></svg><span>毛坯</span></li>
      <li><svg><use href="#start"/></svg><span>起始点</span></li>
      <li><svg><use href="#mc"/></svg><span>机床后置 : fanuc</span></li>
      <li class="plus"><svg><use href="#tool"/></svg><span>刀具库 : fanuc</span></li>
      <li class="last"><svg><use href="#fold"/></svg><span class="sel">刀具轨迹 : 共 0 条</span></li>
    </ul>
    <div class="tabs">
      <button class="on"><svg><use href="#gear"/></svg>加工管理</button>
      <button><svg><use href="#db"/></svg>属</button>
      <button class="step" aria-label="向左"><svg viewBox="0 0 6 6"><path d="M4.500 0v6L1 3z"/></svg></button>
      <button class="step" aria-label="向右"><svg viewBox="0 0 6 6"><path d="M1.500 0v6L5 3z"/></svg></button>
    </div>
  </aside>
  <section class="view">
    <svg viewBox="-384 0 1908 807" preserveAspectRatio="xMidYMid meet">
      <defs>
        <linearGradient id="in" x1="0" y1=".3" x2="1" y2=".45"><stop offset="0" stop-color="#b80000"/><stop offset=".2" stop-color="#c40000"/><stop offset=".4" stop-color="#ae0000"/><stop offset=".62" stop-color="#a60000"/><stop offset=".76" stop-color="#8a0000"/><stop offset=".9" stop-color="#660000"/><stop offset="1" stop-color="#6c0000"/></linearGradient>
        <linearGradient id="out" x1="0" y1="0" x2="1" y2="0"><stop offset="0" stop-color="#780000"/><stop offset=".12" stop-color="#600000"/><stop offset=".3" stop-color="#5c0000"/><stop offset=".5" stop-color="#800000"/><stop offset=".68" stop-color="#a80000"/><stop offset=".85" stop-color="#a00000"/><stop offset="1" stop-color="#780000"/></linearGradient>
        <radialGradient id="dark"><stop offset="0" stop-color="#200000" stop-opacity=".7"/><stop offset="1" stop-color="#200000" stop-opacity="0"/></radialGradient>
        <radialGradient id="hot"><stop offset="0" stop-color="#d80000" stop-opacity=".55"/><stop offset="1" stop-color="#c80000" stop-opacity="0"/></radialGradient>
        <radialGradient id="shine"><stop offset="0" stop-color="#d08880" stop-opacity=".85"/><stop offset="1" stop-color="#c04040" stop-opacity="0"/></radialGradient>
        <radialGradient id="grey"><stop offset="0" stop-color="#6c5050" stop-opacity=".75"/><stop offset="1" stop-color="#503030" stop-opacity="0"/></radialGradient>
        <clipPath id="shape"><path d="M178 215C180 330 205 410 250 490C285 545 320 592 350 603Q390 616 440 600Q464 590 485 572Q510 582 530 600Q570 640 604 657Q630 666 655 657Q695 625 720 577Q760 578 790 564Q815 550 850 505C915 410 958 300 962 215z"/></clipPath>
        <clipPath id="mouth"><ellipse cx="570" cy="219" rx="392" ry="145"/></clipPath>
      </defs>
      <g clip-path="url(#shape)">
        <path d="M170 200h800v480H170z" fill="url(#out)"/>
        <ellipse cx="340" cy="500" rx="120" ry="100" fill="url(#dark)"/>
        <ellipse cx="410" cy="575" rx="90" ry="50" fill="url(#hot)"/>
        <ellipse cx="770" cy="380" rx="150" ry="120" fill="url(#hot)"/>
        <ellipse cx="590" cy="600" rx="70" ry="80" fill="url(#dark)"/>
        <ellipse cx="510" cy="500" rx="75" ry="60" fill="url(#grey)"/>
        <ellipse cx="570" cy="590" rx="50" ry="36" fill="url(#grey)"/>
      </g>
      <g clip-path="url(#mouth)">
        <path d="M170 70h800v300H170z" fill="url(#in)"/>
        <ellipse cx="340" cy="270" rx="200" ry="110" fill="url(#hot)"/>
        <ellipse cx="730" cy="335" rx="150" ry="70" fill="url(#hot)"/>
        <ellipse cx="462" cy="305" rx="38" ry="95" fill="url(#shine)"/>
      </g>
      <g fill="none" stroke="#0000a8" stroke-width="3">
        <path d="M428 22L1105 166 711 416 35 272zM428 376L1105 521 711 770 35 627zM428 22v354M1105 166v355M711 416v354M35 272v355"/>
      </g>
      <ellipse cx="570" cy="219" rx="392" ry="145" fill="none" stroke="#e01010" stroke-width="3"/>
      <ellipse cx="570" cy="219" rx="392" ry="145" fill="none" stroke="#ffb0a0" stroke-width="3" stroke-dasharray="4 45"/>
      <g fill="none" stroke="#e8b0ac" stroke-width="3">
        <path d="M232 148C238 215 260 275 288 322C315 370 345 415 395 462Q440 508 490 535"/>
        <path d="M469 80C469 200 478 300 488 360C495 430 502 475 510 505Q520 535 532 537Q543 536 547 523"/>
        <path d="M767 95C762 200 745 270 710 350Q690 405 668 440Q640 485 612 525"/>
        <path d="M948 183C944 280 915 370 885 430Q860 485 825 535Q800 575 735 576Q695 574 655 547"/>
        <path d="M191 258C195 380 225 455 260 510Q315 600 350 605Q390 614 430 604Q462 592 485 566"/>
        <path d="M373 345Q378 410 395 462Q412 515 440 545Q465 572 495 577"/>
        <path d="M670 360Q671 500 655 585Q640 662 624 662Q607 660 592 585"/>
      </g>
      <path d="M907 292C908 350 890 430 850 478Q800 540 655 570" fill="none" stroke="#e01818" stroke-width="3"/>
      <path d="M907 292C908 350 890 430 850 478Q800 540 655 570" fill="none" stroke="#ffa898" stroke-width="3" stroke-dasharray="4 30"/>
      <ellipse cx="570" cy="552" rx="87" ry="31" fill="#300808" fill-opacity=".75" stroke="#e82020" stroke-width="4" stroke-dasharray="18 5"/>
      <path d="M569 503v49L600 530M569 552l60 11" fill="none" stroke="#d01010" stroke-width="3"/>
      <g class="axis"><text x="572" y="526">Z</text><text x="604" y="556">Y</text><text x="572" y="577">0</text><text x="628" y="589">X</text></g>
      <path d="M846 510v30l7-6 7 17 6-3-7-16h9z" fill="#fff" stroke="#fff"/>
    </svg>
  </section>
  <div class="bar col" data-icons="f1 f2 f3 f4 | f5 f6"></div>
  <div class="bar col" data-icons="h1 h2 | h2 | h3 h4"></div>
  <div class="bar col tall" data-icons="line arc circ rect ell spl pt fx disc ang off blob surf clip | A | er1 er2 er3 | er4"></div>
</main>

<div class="lower">
  <div class="row"><div class="bar" data-icons="s1 s2 s3 s4 s5 s6 s7 s8 s8 s9"></div></div>
  <div class="row"><div class="bar" data-icons="erase | t1 t2 t3 t4 t5 t6 | u1 u2 u3 | v1 v2 v3 v4 s7 v4 s8"></div></div>
  <div class="row"><div class="bar" data-icons="w1 w2 w3 w4 s2 w5 w6"></div></div>
</div>

<div class="status">
  <p class="hint">拾取加工边界...(左键:拾取; 右键:确认; ESC:退出; 空格:查看拾取方式)</p>
  <p class="guide">操作指导</p>
  <p class="pick">链拾取</p>
  <p class="pos">21.492,26.426,0.000</p>
</div>

<footer class="task">
  <button class="start"><svg><use href="#flag"/></svg>开始</button>
  <div class="quick"><svg><use href="#q1"/></svg><svg><use href="#q2"/></svg><svg><use href="#q3"/></svg><span>»</span></div>
  <button class="win"><svg><use href="#dir"/></svg>联系</button>
  <button class="win"><svg><use href="#dir"/></svg>考图题答案</button>
  <button class="win on"><svg><use href="#app"/></svg>CAXA制造工程师20...</button>
  <svg class="ime"><use href="#kb"/></svg>
  <div class="tray"><svg><use href="#back"/></svg><svg><use href="#r1"/></svg><svg><use href="#r2"/></svg><svg><use href="#r3"/></svg><svg><use href="#r4"/></svg><svg><use href="#r5"/></svg><svg><use href="#r5"/></svg><time>9:54</time></div>
</footer>
<script src="toolbars.js"></script>
</body>
</html>
```
FILE: styles.css
```css
*, *::before, *::after { box-sizing: border-box; }
:root { --face: #e8e8da; --line: #b8b8aa; --lite: #fbfbf4; }
body {
  margin: 0; height: 100vh; display: flex; flex-direction: column; overflow: hidden;
  background: var(--face); color: #111;
  font: 7px/10px "Liberation Mono", "Noto Sans CJK SC", monospace;
}
button { font: inherit; color: inherit; border: 0; background: none; padding: 0; margin: 0; }
h1, p, ul { margin: 0; padding: 0; font: inherit; }
svg { display: block; flex: none; }
.defs { position: absolute; width: 0; height: 0; }

.title {
  display: flex; align-items: center; height: 14px; flex: none; padding-left: 2px; gap: 2px;
  background: linear-gradient(#2a78f0, #0450e4 25%, #0058f4 80%, #0040c0); color: #fff;
}
.app-icon { width: 9px; height: 9px; }
.title h1 { flex: 1; font-size: 8px; font-weight: bold; white-space: nowrap; line-height: 12px; }
.title h1 span { font-size: 9px; }
.winbtns { display: flex; gap: 2px; }
.winbtns button { width: 13px; height: 11px; border: 1px solid #a8c4f8; border-radius: 2px; background: #2c62e0; }
.winbtns svg { width: 11px; height: 9px; }
.winbtns .close { background: #e04a24; }

.menu { display: flex; gap: 6px; height: 14px; flex: none; padding-left: 8px; align-items: center; border-left: 2px double var(--line); }
.menu button { width: 27px; text-align: left; white-space: nowrap; line-height: 12px; }

.row { display: flex; gap: 4px; height: 14px; flex: none; border-top: 1px solid var(--lite); }
.row-main { height: 16px; border-top: 1px solid #c8c8ba; }
.bar { display: flex; align-items: center; border-right: 1px solid var(--line); padding-right: 3px; }
.bar::before { content: ""; width: 3px; height: 11px; margin: 0 1px 0 2px; border: 1px solid var(--line); border-left-color: var(--lite); }
.bar button { width: 14px; height: 13px; display: grid; place-items: center; flex: none; }
.bar button svg { width: 10px; height: 10px; opacity: .88; }
.bar button.pressed { background: #f7f7f0; border: 1px solid #c4c4b6; }
.bar button.drop { width: 6px; }
.bar button.drop svg { width: 6px; height: 12px; }
.bar i { width: 2px; height: 11px; margin: 0 2px; border-left: 1px solid var(--line); border-right: 1px solid var(--lite); flex: none; }

main { flex: 1; min-height: 0; display: flex; align-items: flex-start; }
.col { flex-direction: column; width: 17px; flex: none; padding: 0 0 3px; border-bottom: 1px solid var(--line); }
.col::before { width: 13px; height: 3px; margin: 2px 0 1px; }
.col button { width: 14px; height: 12px; }
.col button svg { width: 11px; height: 11px; }
.col i { width: 13px; height: 1px; margin: 1px 0; border: 0; background: var(--line); }
.tall { height: 241px; border-right: 0; }
.tall button { flex: 1 1 0; min-height: 0; }
.bar .fx { font: italic 8px/10px "Liberation Serif", serif; }
.bar .bold { font: bold 11px/11px "Liberation Serif", serif; }

.panel { align-self: stretch; width: 113px; margin: 0 2px 0 3px; flex: none; display: flex; flex-direction: column; border-left: 2px solid #8c8c84; border-right: 2px solid #d4d4c6; padding-left: 1px; }
.tree { flex: 1; list-style: none; background: #fcfcfc; border: 1px solid #555; padding: 2px 1px 1px; }
.tree li { display: flex; align-items: center; gap: 3px; height: 10px; margin-left: 5px; padding-left: 8px; position: relative; white-space: nowrap; }
.tree li.root { margin-left: 0; padding-left: 0; }
.tree svg { width: 10px; height: 9px; }
.tree li:not(.root)::before { content: ""; position: absolute; left: 0; top: 0; width: 6px; height: 10px; border-left: 1px dotted #aaa; background: linear-gradient(#bbb, #bbb) 0 5px / 6px 1px no-repeat; }
.tree li.last::before { height: 6px; }
.tree li.plus::after { content: "+"; position: absolute; left: -2px; top: 3px; width: 5px; height: 5px; border: 1px solid #999; background: #fff; font-size: 5px; line-height: 3px; text-align: center; }
.tree .sel { background: #2c62c4; color: #fff; padding: 0 1px; margin-left: -1px; }
.tabs { display: flex; height: 14px; align-items: center; }
.tabs button { display: flex; align-items: center; gap: 4px; height: 12px; padding: 0 3px; border-right: 1px solid #888; }
.tabs button svg { width: 10px; height: 9px; }
.tabs button:nth-child(2) { flex: 1; border-right: 0; gap: 5px; }
.tabs .on { background: #f2f2e8; }
.tabs .step { width: 10px; height: 8px; border: 1px solid #999; border-color: #fff #888 #888 #fff; justify-content: center; padding: 0; }
.tabs .step svg { width: 5px; height: 5px; }

.view { flex: 1; align-self: stretch; min-width: 0; background: #000; }
.view svg { width: 100%; height: 100%; }
.axis { fill: #fff; font: bold 20px "Liberation Sans", sans-serif; }

.lower { flex: none; padding-bottom: 1px; border-top: 1px solid #fff; }
.lower .row { border-top: 0; border-bottom: 1px solid #d2d2c4; width: max-content; }

.status { display: flex; height: 11px; flex: none; border-top: 1px solid #c0c0b2; background: #fbf9f7; white-space: nowrap; }
.status p { line-height: 10px; border-left: 1px solid #b4b4a8; }
.status .hint { flex: 0 0 45%; border-left: 0; }
.status .guide { flex: 1; text-align: center; color: #777; }
.status .pick { flex: 0 0 83px; text-align: center; }
.status .pos { flex: 0 0 166px; }

.task { display: flex; align-items: center; height: 18px; flex: none; color: #fff; background: linear-gradient(#3c80ee, #2260dc 20%, #2058d4 80%, #1a48b0); white-space: nowrap; }
.start { display: flex; align-items: center; gap: 4px; width: 60px; height: 16px; padding-left: 6px; border-radius: 0 6px 6px 0; background: linear-gradient(#62b262, #3c963c 30%, #328832); font: italic 12px/14px "Noto Sans CJK SC", sans-serif; }
.start svg { width: 12px; height: 12px; }
.quick { display: flex; align-items: center; gap: 4px; width: 66px; margin: 0 3px 0 6px; padding-left: 6px; border: 1px dotted #1a3c98; border-width: 0 1px; }
.quick svg { width: 10px; height: 10px; }
.win { display: flex; align-items: center; gap: 4px; width: 97px; height: 14px; padding-left: 6px; margin-right: 1px; border-radius: 2px; background: linear-gradient(#5c9cf8, #3c80f0 25%, #3878ea); }
.win svg { width: 9px; height: 9px; }
.win.on { background: #1c48b0; }
.ime { width: 9px; height: 10px; margin: 0 4px 0 auto; }
.tray { display: flex; align-items: center; gap: 1px; height: 16px; width: 102px; background: linear-gradient(90deg, #1890ec, #129af0); border-top: 1px solid #50b8f8; }
.tray svg { width: 10px; height: 10px; }
.tray svg:first-child { margin-left: -4px; }
.tray time { font: 8px/10px "Liberation Sans", sans-serif; margin-left: 6px; }
```
FILE: toolbars.js
```js
// Builds each toolbar from its icon list: "|" separator, "v" drop-down caret, "*" pressed.
document.querySelectorAll("[data-icons]").forEach(function (bar) {
  bar.innerHTML = bar.dataset.icons.split(" ").map(function (name) {
    if (name === "|") return "<i></i>";
    if (name === "v") return '<button class="drop" aria-label="more"><svg><use href="#caret"/></svg></button>';
    if (name === "fx") return '<button class="fx">f(x)</button>';
    if (name === "A") return '<button class="bold">A</button>';
    var on = name[0] === "*";
    var id = on ? name.slice(1) : name;
    return '<button aria-label="' + id + '"' + (on ? ' class="pressed"' : "") +
      '><svg><use href="#' + id + '"/></svg></button>';
  }).join("");
});
```
